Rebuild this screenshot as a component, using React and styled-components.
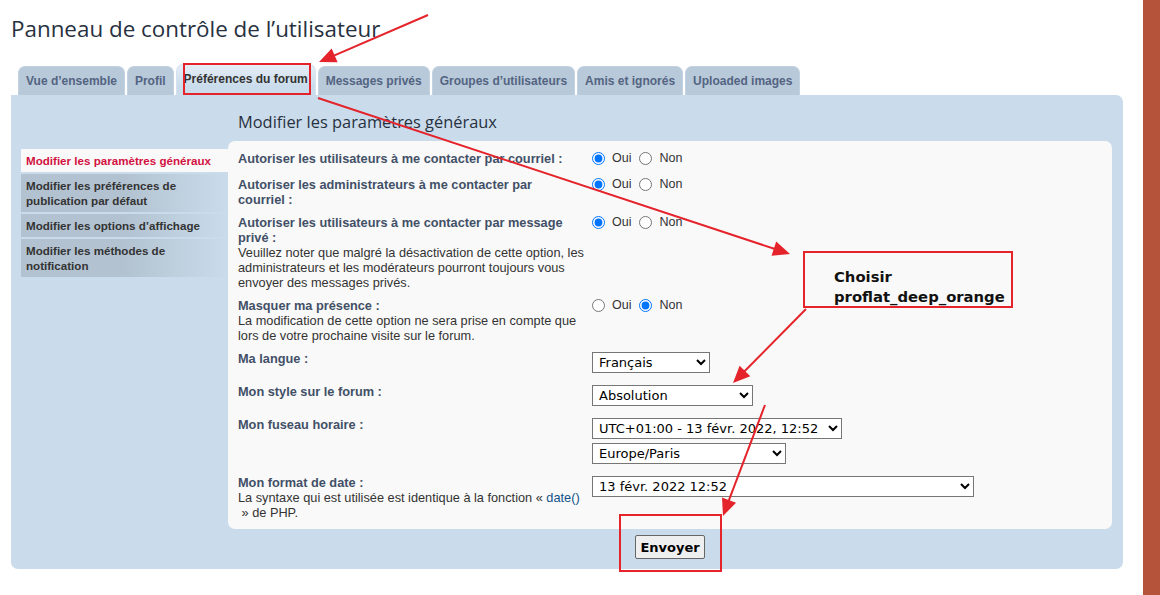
import React from "react";
import styled, { createGlobalStyle } from "styled-components";

const GlobalStyle = createGlobalStyle`
  html, body { margin: 0; padding: 0; height: 100%; background: #ffffff; }
  #root { height: 100%; }
  body {
    font-family: "Liberation Sans", Arial, sans-serif;
    font-size: 12px;
    color: #333333;
  }
`;

const RED = "#E4232B";
const NB = "\u00a0";

const Page = styled.div`
  position: relative;
  display: flex;
  height: 595px;
  overflow: hidden;
`;

const Main = styled.div`
  flex: 1;
  padding: 0 20px 0 11px;
`;

const SideStripe = styled.div`
  width: 17px;
  background: #b5533a;
`;

const Title = styled.h1`
  margin: 0;
  padding-top: 14px;
  font-family: "Open Sans", "DejaVu Sans", sans-serif;
  font-weight: normal;
  font-size: 22.4px;
  line-height: 30px;
  color: #28313f;
`;

const Tabs = styled.ul`
  display: flex;
  align-items: flex-end;
  gap: 2px;
  list-style: none;
  margin: 20px 0 0 7px;
  padding: 0;
  height: 31px;
`;

const Tab = styled.li`
  display: flex;
  align-items: center;
  box-sizing: border-box;
  height: ${(p) => (p.$active ? 31 : 29)}px;
  padding: 0 7px ${(p) => (p.$active ? 2 : 0)}px;
  border-radius: 7px 7px 0 0;
  border: 1px solid ${(p) => (p.$active ? "#d6e3ef" : "#c3d2e0")};
  border-bottom: none;
  background: ${(p) =>
    p.$active
      ? "linear-gradient(to bottom, #e6eef6 0%, #cadceb 70%)"
      : "#b8c9d9"};
  color: ${(p) => (p.$active ? "#333333" : "#536482")};
  font-weight: bold;
  font-size: 12px;
  white-space: nowrap;
`;

const Panel = styled.div`
  display: flex;
  background: #cadceb;
  border-radius: 0 7px 7px 7px;
  padding: 0 11px 10px 10px;
`;

const Nav = styled.ul`
  display: flex;
  flex-direction: column;
  gap: 2px;
  width: 207px;
  flex: none;
  margin: 54px 0 0;
  padding: 0;
  list-style: none;
`;

const NavItem = styled.li`
  padding: 4px 5px;
  line-height: 15px;
  font-weight: bold;
  font-size: 11.6px;
  color: ${(p) => (p.$active ? "#d31141" : "#333333")};
  background: ${(p) =>
    p.$active
      ? "#f9f9f9"
      : "linear-gradient(to right, #b2c2d1 50%, #cadceb 100%)"};
`;

const Content = styled.div`
  flex: 1;
  display: flex;
  flex-direction: column;
`;

const Heading = styled.h2`
  margin: 15px 0 7px 10px;
  font-family: "Open Sans", "DejaVu Sans", sans-serif;
  font-weight: normal;
  font-size: 16.4px;
  line-height: 24px;
  color: #28313f;
`;

const Box = styled.div`
  background: #f9f9f9;
  border-radius: 7px;
  padding: 10px 10px 9px;
`;

const Row = styled.div`
  display: flex;
  margin-bottom: 8px;
  &:last-child { margin-bottom: 0; }
`;

const Term = styled.div`
  width: 354px;
  flex: none;
  box-sizing: border-box;
  padding-right: 4px;
  font-size: 12.75px;
  line-height: 15px;
`;

const Label = styled.span`
  display: block;
  font-weight: bold;
  color: #425067;
`;

const Explain = styled.span`
  display: block;
  color: #333333;
`;

const Link = styled.a`
  color: #105289;
  text-decoration: none;
`;

const Field = styled.div`
  flex: 1;
  display: flex;
  flex-direction: column;
  align-items: flex-start;
  min-height: 18px;
  line-height: 15px;
`;

const RadioGroup = styled.div`
  display: flex;
  align-items: center;
  height: 15px;
`;

const RadioLabel = styled.label`
  display: flex;
  align-items: center;
  margin-right: 8px;
  font-size: 12.5px;
  color: #333333;
`;

const Radio = styled.input`
  width: 13px;
  height: 13px;
  margin: 0 7px 0 0;
`;

const Select = styled.select`
  box-sizing: border-box;
  width: ${(p) => p.$w}px;
  height: 21px;
  margin: 1px 0 3px;
  padding: 0 0 0 2px;
  border: 1px solid #767676;
  border-radius: 0;
  background: #ffffff;
  color: #000000;
  font-family: "DejaVu Sans", Verdana, sans-serif;
  font-size: 13px;
`;

const Submit = styled.button`
  align-self: center;
  margin-top: 6px;
  height: 24px;
  padding: 0 4px;
  border: 1px solid #666666;
  border-radius: 2px;
  background: #efefef;
  color: #000000;
  font-family: "DejaVu Sans", Verdana, sans-serif;
  font-weight: bold;
  font-size: 13px;
`;

/* annotation layer drawn over the page */
const Marks = styled.svg`
  position: absolute;
  left: 0;
  top: 0;
  pointer-events: none;
`;

const Callout = styled.div`
  position: absolute;
  left: 803px;
  top: 251px;
  width: 210px;
  height: 57px;
  box-sizing: border-box;
  border: 2px solid ${RED};
  padding: 14px 0 0 29px;
  font-family: "DejaVu Sans", Verdana, sans-serif;
  font-weight: bold;
  font-size: 14.8px;
  line-height: 20px;
  color: #111111;
  white-space: nowrap;
`;

const tabs = [
  "Vue d’ensemble",
  "Profil",
  "Préférences du forum",
  "Messages privés",
  "Groupes d’utilisateurs",
  "Amis et ignorés",
  "Uploaded images",
];

const navItems = [
  "Modifier les paramètres généraux",
  "Modifier les préférences de publication par défaut",
  "Modifier les options d’affichage",
  "Modifier les méthodes de notification",
];

function Arrow({ x1, y1, x2, y2 }) {
  const len = 17;
  const w = 7.5;
  const dx = x2 - x1;
  const dy = y2 - y1;
  const d = Math.hypot(dx, dy);
  const ux = dx / d;
  const uy = dy / d;
  const bx = x2 - ux * len;
  const by = y2 - uy * len;
  const pts = `${x2},${y2} ${bx - uy * w},${by + ux * w} ${bx + uy * w},${by - ux * w}`;
  return (
    <g>
      <line x1={x1} y1={y1} x2={bx + ux * 2} y2={by + uy * 2} stroke={RED} strokeWidth="2" />
      <polygon points={pts} fill={RED} />
    </g>
  );
}

function YesNo({ name, yes }) {
  return (
    <RadioGroup>
      <RadioLabel>
        <Radio type="radio" name={name} defaultChecked={yes} />
        Oui
      </RadioLabel>
      <RadioLabel>
        <Radio type="radio" name={name} defaultChecked={!yes} />
        Non
      </RadioLabel>
    </RadioGroup>
  );
}

export default function App() {
  return (
    <>
      <GlobalStyle />
      <Page>
        <Main>
          <Title>Panneau de contrôle de l’utilisateur</Title>
          <Tabs>
            {tabs.map((t) => (
              <Tab key={t} $active={t === "Préférences du forum"}>
                {t}
              </Tab>
            ))}
          </Tabs>
          <Panel>
            <Nav>
              {navItems.map((n, i) => (
                <NavItem key={n} $active={i === 0}>
                  {n}
                </NavItem>
              ))}
            </Nav>
            <Content>
              <Heading>Modifier les paramètres généraux</Heading>
              <Box>
                <Row>
                  <Term>
                    <Label>{`Autoriser les utilisateurs à me contacter par courriel${NB}:`}</Label>
                  </Term>
                  <Field>
                    <YesNo name="viewemail" yes />
                  </Field>
                </Row>
                <Row>
                  <Term>
                    <Label>{`Autoriser les administrateurs à me contacter par courriel${NB}:`}</Label>
                  </Term>
                  <Field>
                    <YesNo name="massemail" yes />
                  </Field>
                </Row>
                <Row>
                  <Term>
                    <Label>{`Autoriser les utilisateurs à me contacter par message privé${NB}:`}</Label>
                    <Explain>
                      Veuillez noter que malgré la désactivation de cette option, les
                      administrateurs et les modérateurs pourront toujours vous envoyer
                      des messages privés.
                    </Explain>
                  </Term>
                  <Field>
                    <YesNo name="allowpm" yes />
                  </Field>
                </Row>
                <Row>
                  <Term>
                    <Label>{`Masquer ma présence${NB}:`}</Label>
                    <Explain>
                      La modification de cette option ne sera prise en compte que lors de
                      votre prochaine visite sur le forum.
                    </Explain>
                  </Term>
                  <Field>
                    <YesNo name="hideonline" yes={false} />
                  </Field>
                </Row>
                <Row>
                  <Term>
                    <Label>{`Ma langue${NB}:`}</Label>
                  </Term>
                  <Field>
                    <Select $w={118} defaultValue="fr">
                      <option value="fr">Français</option>
                    </Select>
                  </Field>
                </Row>
                <Row>
                  <Term>
                    <Label>{`Mon style sur le forum${NB}:`}</Label>
                  </Term>
                  <Field>
                    <Select $w={161} defaultValue="absolution">
                      <option value="absolution">Absolution</option>
                      <option value="proflat_deep_orange">proflat_deep_orange</option>
                    </Select>
                  </Field>
                </Row>
                <Row>
                  <Term>
                    <Label>{`Mon fuseau horaire${NB}:`}</Label>
                  </Term>
                  <Field>
                    <Select $w={250} defaultValue="utc1">
                      <option value="utc1">UTC+01:00 - 13 févr. 2022, 12:52</option>
                    </Select>
                    <Select $w={194} defaultValue="paris">
                      <option value="paris">Europe/Paris</option>
                    </Select>
                  </Field>
                </Row>
                <Row>
                  <Term>
                    <Label>{`Mon format de date${NB}:`}</Label>
                    <Explain>
                      La syntaxe qui est utilisée est identique à la fonction «{" "}
                      <Link href="#date">date()</Link>
                      <br />
                      &nbsp;» de PHP.
                    </Explain>
                  </Term>
                  <Field>
                    <Select $w={382} defaultValue="d">
                      <option value="d">13 févr. 2022 12:52</option>
                    </Select>
                  </Field>
                </Row>
              </Box>
              <Submit type="button">Envoyer</Submit>
            </Content>
          </Panel>
        </Main>
        <SideStripe />

        <Marks width="1160" height="595" viewBox="0 0 1160 595">
          <rect x="184" y="64" width="126" height="30" fill="none" stroke={RED} strokeWidth="2" />
          <rect x="620" y="515" width="101" height="56" fill="none" stroke={RED} strokeWidth="2" />
          <Arrow x1={428} y1={15} x2={319} y2={62} />
          <Arrow x1={318} y1={98} x2={790} y2={254} />
          <Arrow x1={806} y1={309} x2={733} y2={383} />
          <Arrow x1={765} y1={405} x2={723} y2={516} />
        </Marks>
        <Callout>
          Choisir
          <br />
          proflat_deep_orange
        </Callout>
      </Page>
    </>
  );
}
